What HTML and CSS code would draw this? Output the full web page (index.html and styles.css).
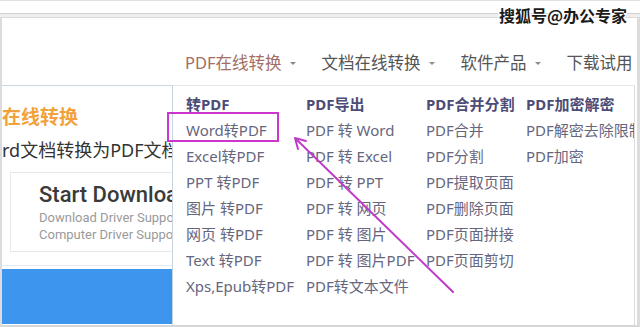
FILE: index.html
```html
<!DOCTYPE html>
<html lang="zh">
<head>
<meta charset="utf-8">
<link rel="stylesheet" href="styles.css">
</head>
<body>
<div class="screen">
  <div class="chrome"><div class="band"></div></div>
  <div class="watermark">搜狐号@办公专家</div>
  <div class="window">
    <nav class="nav">
      <span class="nav-item active">PDF在线转换<i class="caret"></i></span>
      <span class="nav-item">文档在线转换<i class="caret"></i></span>
      <span class="nav-item">软件产品<i class="caret"></i></span>
      <span class="nav-item">下载试用</span>
    </nav>
    <div class="main">
      <aside class="side">
        <div class="side-box">
          <div class="side-title">在线转换</div>
          <div class="side-desc">rd文档转换为PDF文档</div>
          <div class="card">
            <div class="card-title">Start Download</div>
            <div class="card-sub">Download Driver Support</div>
            <div class="card-sub">Computer Driver Support</div>
          </div>
        </div>
        <div class="blue-bar"></div>
      </aside>
      <div class="dropdown">
        <ul class="col">
          <li class="col-head">转PDF</li>
          <li>Word转PDF</li>
          <li>Excel转PDF</li>
          <li>PPT 转PDF</li>
          <li>图片 转PDF</li>
          <li>网页 转PDF</li>
          <li>Text 转PDF</li>
          <li>Xps,Epub转PDF</li>
        </ul>
        <ul class="col">
          <li class="col-head">PDF导出</li>
          <li>PDF 转 Word</li>
          <li>PDF 转 Excel</li>
          <li>PDF 转 PPT</li>
          <li>PDF 转 网页</li>
          <li>PDF 转 图片</li>
          <li>PDF 转 图片PDF</li>
          <li>PDF转文本文件</li>
        </ul>
        <ul class="col">
          <li class="col-head">PDF合并分割</li>
          <li>PDF合并</li>
          <li>PDF分割</li>
          <li>PDF提取页面</li>
          <li>PDF删除页面</li>
          <li>PDF页面拼接</li>
          <li>PDF页面剪切</li>
        </ul>
        <ul class="col">
          <li class="col-head">PDF加密解密</li>
          <li>PDF解密去除限制</li>
          <li>PDF加密</li>
        </ul>
      </div>
    </div>
  </div>
  <div class="highlight"></div>
  <svg class="arrow" width="640" height="327" viewBox="0 0 640 327">
    <line x1="453" y1="292" x2="296" y2="139" stroke="#c03cc8" stroke-width="2" stroke-linecap="round"/>
    <polyline points="298,149 295,138 306,141" fill="none" stroke="#c03cc8" stroke-width="2" stroke-linecap="round" stroke-linejoin="round"/>
  </svg>
</div>
</body>
</html>
```
FILE: styles.css
```css
* { box-sizing: border-box; }
html, body { margin: 0; padding: 0; background: #fff; }
body { width: 640px; height: 327px; overflow: hidden; font-family: "Noto Sans", "Noto Sans CJK SC", sans-serif; }
ul { list-style: none; margin: 0; padding: 0; }

.screen { position: relative; width: 640px; height: 327px; display: flex; flex-direction: column; overflow: hidden; }

.chrome { height: 18px; border-top: 1px solid #e0e0e0; display: flex; flex-direction: column; justify-content: flex-end; }
.band { height: 5px; background: #efefef; border-top: 1px solid #d2d2d2; border-bottom: 1px solid #dadada; }

.watermark { position: absolute; top: 3px; right: 13px; font-family: "Noto Sans CJK SC", sans-serif; font-size: 16px; font-weight: 700; color: #1a1a1a; line-height: 24px;
  text-shadow: 1px 0 0 #fff, -1px 0 0 #fff, 0 1px 0 #fff, 0 -1px 0 #fff, 1px 1px 0 #fff, -1px -1px 0 #fff, 1px -1px 0 #fff, -1px 1px 0 #fff; }

.window { flex: 1; display: flex; flex-direction: column; border-left: 2px solid #dcdcdc; border-right: 3px solid #dcdcdc; border-bottom: 2px solid #d6d6d6; min-height: 0; }

.nav { height: 67px; padding: 33px 0 0 183px; display: flex; gap: 26px; font-size: 16.5px; line-height: 24px; color: #555; white-space: nowrap; }
.nav-item { display: flex; align-items: center; height: 24px; }
.nav-item.active { color: #a26e66; }
.caret { display: inline-block; margin-left: 8px; width: 0; height: 0; border-left: 3px solid transparent; border-right: 3px solid transparent; border-top: 3px solid #8a8a8a; }

.main { flex: 1; display: flex; min-height: 0; }

.side { width: 170px; display: flex; flex-direction: column; overflow: hidden; }
.side-box { height: 181px; border-top: 1px solid #cad6e2; border-bottom: 1px solid #e6eaf0; overflow: hidden; }
.side-title { margin-top: 18px; font-family: "Noto Sans CJK SC", sans-serif; font-size: 19px; font-weight: 700; line-height: 24px; color: #f2a23a; white-space: nowrap; }
.side-desc { margin-top: 10px; font-size: 18px; line-height: 24px; color: #333; white-space: nowrap; }
.card { margin: 10px 0 0 8px; width: 300px; height: 80px; border: 1px solid #e8e8e8; padding: 8px 0 0 28px; white-space: nowrap; font-family: Roboto, "Noto Sans", sans-serif; }
.card-title { font-size: 22px; font-weight: 500; line-height: 28px; color: #3a3a3a; }
.card-sub { font-size: 13px; line-height: 17px; color: #9a9a9a; }
.blue-bar { margin-top: 3px; height: 55px; background: #3d95ee; }

.dropdown { flex: 1; margin-right: 2px; display: grid; grid-template-columns: 120px 120px 100px minmax(0, 1fr); padding: 5px 0 0 13px; background: #fff;
  border-left: 1px solid #c6d4e2; border-top: 1px solid #e6e6e6; border-right: 1px solid #dcdcdc; overflow: hidden; }
.col { white-space: nowrap; overflow: hidden; }
.col li { font-size: 15px; line-height: 26px; color: #66667e; }
.col li.col-head { font-weight: 700; color: #4c4c76; }

.highlight { position: absolute; left: 167px; top: 112px; width: 112px; height: 30px; border: 2px solid #cc36cc; }
.arrow { position: absolute; left: 0; top: 0; pointer-events: none; }
```
